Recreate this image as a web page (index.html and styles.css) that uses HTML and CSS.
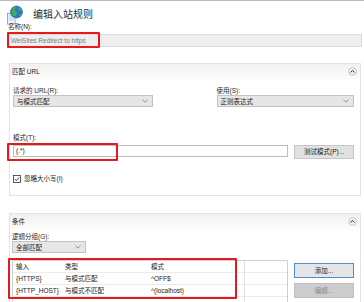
FILE: index.html
```html
<!DOCTYPE html>
<html lang="zh-CN">
<head>
<meta charset="utf-8">
<title>编辑入站规则</title>
<link rel="stylesheet" href="styles.css">
</head>
<body>
<div class="topline"></div>
<div class="page">
  <div class="header">
    <svg class="icon" viewBox="0 0 17 20" width="17" height="20">
      <rect x="1.5" y="8.5" width="7.5" height="10.5" fill="#eef4fb" stroke="#7f97b3" stroke-width="0.8"/>
      <rect x="2.8" y="10.5" width="4.5" height="0.8" fill="#a9bdd3"/>
      <rect x="2.8" y="12.5" width="4.5" height="0.8" fill="#a9bdd3"/>
      <rect x="2.8" y="14.5" width="4.5" height="0.8" fill="#a9bdd3"/>
      <circle cx="10.5" cy="7" r="6" fill="#2a78d2"/>
      <path d="M6 4.2 C7.5 2.2 9.5 1.6 10.5 2.3 C10 3.5 8.6 3.6 8.8 5 C9 6.3 10.8 6 11 7.6 C11.2 9.3 9.6 9.8 9.2 11.6 C7.8 11 6.2 9.6 5.8 8 C6.8 7.2 6.2 5.6 6 4.2 Z" fill="#46b04a"/>
      <path d="M12.2 2 C14 2.6 15.8 4.4 16 6.4 C14.8 6.2 14 5 12.8 5.2 C12 4.4 12.6 3 12.2 2 Z" fill="#46b04a"/>
      <path d="M13.4 9.2 C14.4 8.6 15.6 9 15.8 9.6 C15.2 11 14.2 12 13 12.6 C12.8 11.4 13.2 10.4 13.4 9.2 Z" fill="#46b04a"/>
      <circle cx="10.5" cy="7" r="6" fill="none" stroke="#1b5ea8" stroke-width="0.6"/>
    </svg>
    <span class="title">编辑入站规则</span>
  </div>
  <div class="label name-label">名称(N):</div>
  <div class="textbox readonly name-box">WeiSites Redirect to https</div>

  <section class="group group-url">
    <div class="group-head">
      <span>匹配 URL</span>
      <span class="collapse"><svg viewBox="0 0 9 9" width="9" height="9"><circle cx="4.5" cy="4.5" r="4" fill="#ececec" stroke="#c4c4c4" stroke-width="0.8"/><path d="M2.6 5.4 L4.5 3.5 L6.4 5.4" fill="none" stroke="#333" stroke-width="1"/></svg></span>
    </div>
    <div class="group-body">
      <div class="cols">
        <div class="field field-left">
          <div class="label">请求的 URL(R):</div>
          <div class="select"><span>与模式匹配</span><svg class="chev" viewBox="0 0 6 4" width="6" height="4"><path d="M0.5 0.8 L3 3.2 L5.5 0.8" fill="none" stroke="#777" stroke-width="0.8"/></svg></div>
        </div>
        <div class="field field-right">
          <div class="label">使用(S):</div>
          <div class="select"><span>正则表达式</span><svg class="chev" viewBox="0 0 6 4" width="6" height="4"><path d="M0.5 0.8 L3 3.2 L5.5 0.8" fill="none" stroke="#777" stroke-width="0.8"/></svg></div>
        </div>
      </div>
      <div class="label pattern-label">模式(T):</div>
      <div class="pattern-row">
        <div class="textbox pattern-box">(.*)</div>
        <div class="btn">测试模式(P)...</div>
      </div>
      <div class="check">
        <svg class="checkbox" viewBox="0 0 8 8" width="8" height="8"><rect x="0.5" y="0.5" width="7" height="7" fill="#fff" stroke="#333" stroke-width="0.8"/><path d="M1.8 4.1 L3.3 5.6 L6.2 2.4" fill="none" stroke="#222" stroke-width="0.9"/></svg>
        <span>忽略大小写(I)</span>
      </div>
    </div>
  </section>

  <section class="group group-cond">
    <div class="group-head">
      <span>条件</span>
      <span class="collapse"><svg viewBox="0 0 9 9" width="9" height="9"><circle cx="4.5" cy="4.5" r="4" fill="#ececec" stroke="#c4c4c4" stroke-width="0.8"/><path d="M2.6 5.4 L4.5 3.5 L6.4 5.4" fill="none" stroke="#333" stroke-width="1"/></svg></span>
    </div>
    <div class="group-body cond-body">
      <div class="label">逻辑分组(G):</div>
      <div class="select select-small"><span>全部匹配</span><svg class="chev" viewBox="0 0 6 4" width="6" height="4"><path d="M0.5 0.8 L3 3.2 L5.5 0.8" fill="none" stroke="#777" stroke-width="0.8"/></svg></div>
      <div class="table-row">
        <div class="grid">
          <div class="cell">输入</div><div class="cell">类型</div><div class="cell">模式</div><div class="cell last"></div>
          <div class="cell">{HTTPS}</div><div class="cell">与模式匹配</div><div class="cell">^OFF$</div><div class="cell last"></div>
          <div class="cell">{HTTP_HOST}</div><div class="cell">与模式不匹配</div><div class="cell">^(localhost)</div><div class="cell last"></div>
          <div class="cell"></div><div class="cell"></div><div class="cell"></div><div class="cell last"></div>
        </div>
        <div class="side-buttons">
          <div class="btn btn-default">添加...</div>
          <div class="btn btn-disabled">编辑...</div>
        </div>
      </div>
    </div>
  </section>

  <div class="mark mark-name"></div>
  <div class="mark mark-pattern"></div>
  <div class="mark mark-table"></div>
</div>
</body>
</html>
```

FILE: styles.css
```css
html, body {
  margin: 0;
  padding: 0;
}
body {
  width: 364px;
  height: 302px;
  overflow: hidden;
  background: #ffffff;
  font-family: "Liberation Sans", "Noto Sans CJK SC", sans-serif;
  font-size: 6.5px;
  color: #222;
}
.topline {
  height: 1px;
  background: #bdbdbd;
}
.page {
  position: relative;
  height: 301px;
  overflow: hidden;
}
.header {
  display: flex;
  align-items: flex-start;
  height: 22px;
  padding-left: 6px;
  gap: 10px;
}
.icon {
  margin-top: 4px;
  flex: none;
}
.title {
  margin-top: 6px;
  font-size: 10px;
  line-height: 14px;
  color: #2b2b2b;
  font-family: "Noto Sans CJK SC", sans-serif;
}
.label {
  line-height: 8px;
  color: #2a2a2a;
  white-space: nowrap;
}
.name-label {
  padding-left: 8px;
}
.textbox {
  box-sizing: border-box;
  height: 12px;
  line-height: 10px;
  border: 1px solid #c9c9c9;
  background: #fff;
  padding-left: 2px;
  white-space: nowrap;
}
.readonly {
  background: #eeeeee;
  border-color: #dcdcdc;
  color: #7a7a7a;
}
.name-box {
  margin: 3px 2px 0 8px;
  height: 13px;
  line-height: 11px;
}
.group {
  box-sizing: border-box;
  margin: 16px 3px 0 9px;
  border: 1px solid #e3e3e3;
}
.group-url {
  height: 133px;
}
.group-cond {
  margin-top: 17px;
  height: 120px;
}
.group-head {
  display: flex;
  justify-content: space-between;
  align-items: flex-start;
  height: 16px;
  line-height: 16px;
  padding-left: 2px;
  padding-right: 3px;
  background: linear-gradient(#f1f1f1, #fdfdfd);
  color: #222;
}
.collapse {
  display: flex;
  margin-top: 3px;
}
.group-body {
  padding: 0 6px 0 3px;
}
.cols {
  display: flex;
  gap: 64px;
  padding-top: 7px;
}
.field-left {
  width: 140px;
}
.field-right {
  width: 138px;
}
.select {
  box-sizing: border-box;
  display: flex;
  align-items: center;
  justify-content: space-between;
  height: 12px;
  padding: 0 4px 0 3px;
  background: #e6e6e6;
  border: 1px solid #c3c3c3;
  color: #222;
  white-space: nowrap;
}
.chev {
  flex: none;
}
.pattern-label {
  margin-top: 27px;
}
.pattern-row {
  display: flex;
  align-items: flex-start;
  gap: 6px;
  margin-top: 3px;
}
.pattern-box {
  width: 276px;
  border-color: #bdbdbd;
}
.btn {
  box-sizing: border-box;
  height: 14px;
  line-height: 12px;
  text-align: center;
  background: #e1e1e1;
  border: 1px solid #c6c6c6;
  color: #222;
  white-space: nowrap;
}
.pattern-row .btn {
  width: 60px;
}
.check {
  display: flex;
  align-items: center;
  gap: 3px;
  margin-top: 16px;
  line-height: 8px;
}
.checkbox {
  flex: none;
}
.cond-body {
  padding-left: 2px;
  padding-top: 3px;
}
.select-small {
  width: 74px;
}
.table-row {
  display: flex;
  align-items: flex-start;
  gap: 6px;
  margin-top: 7px;
}
.grid {
  box-sizing: border-box;
  width: 276px;
  height: 60px;
  display: grid;
  grid-template-columns: 49px 86px 96px 1fr;
  grid-auto-rows: 12px;
  border: 1px solid #cfcfcf;
  background: #fff;
}
.cell {
  box-sizing: border-box;
  padding-left: 3px;
  line-height: 11px;
  border-bottom: 1px solid #ececec;
  white-space: nowrap;
  overflow: hidden;
}
.cell.last {
  border-left: 1px solid #e0e0e0;
}
.side-buttons {
  display: flex;
  flex-direction: column;
  gap: 5px;
  margin-top: 3px;
}
.side-buttons .btn {
  width: 60px;
  height: 15px;
  line-height: 13px;
}
.btn-default {
  border-color: #4d8fd6;
  background: #e5e5e5;
}
.btn-disabled {
  background: #cccccc;
  border-color: #bfbfbf;
  color: #8a8a8a;
}
.mark {
  position: absolute;
  border: 2px solid #e6191c;
  border-radius: 1px;
  box-sizing: border-box;
  pointer-events: none;
}
.mark-name {
  left: 7px;
  top: 31px;
  width: 93px;
  height: 16px;
}
.mark-pattern {
  left: 7px;
  top: 142px;
  width: 111px;
  height: 18px;
}
.mark-table {
  left: 8px;
  top: 257px;
  width: 229px;
  height: 41px;
}
```
